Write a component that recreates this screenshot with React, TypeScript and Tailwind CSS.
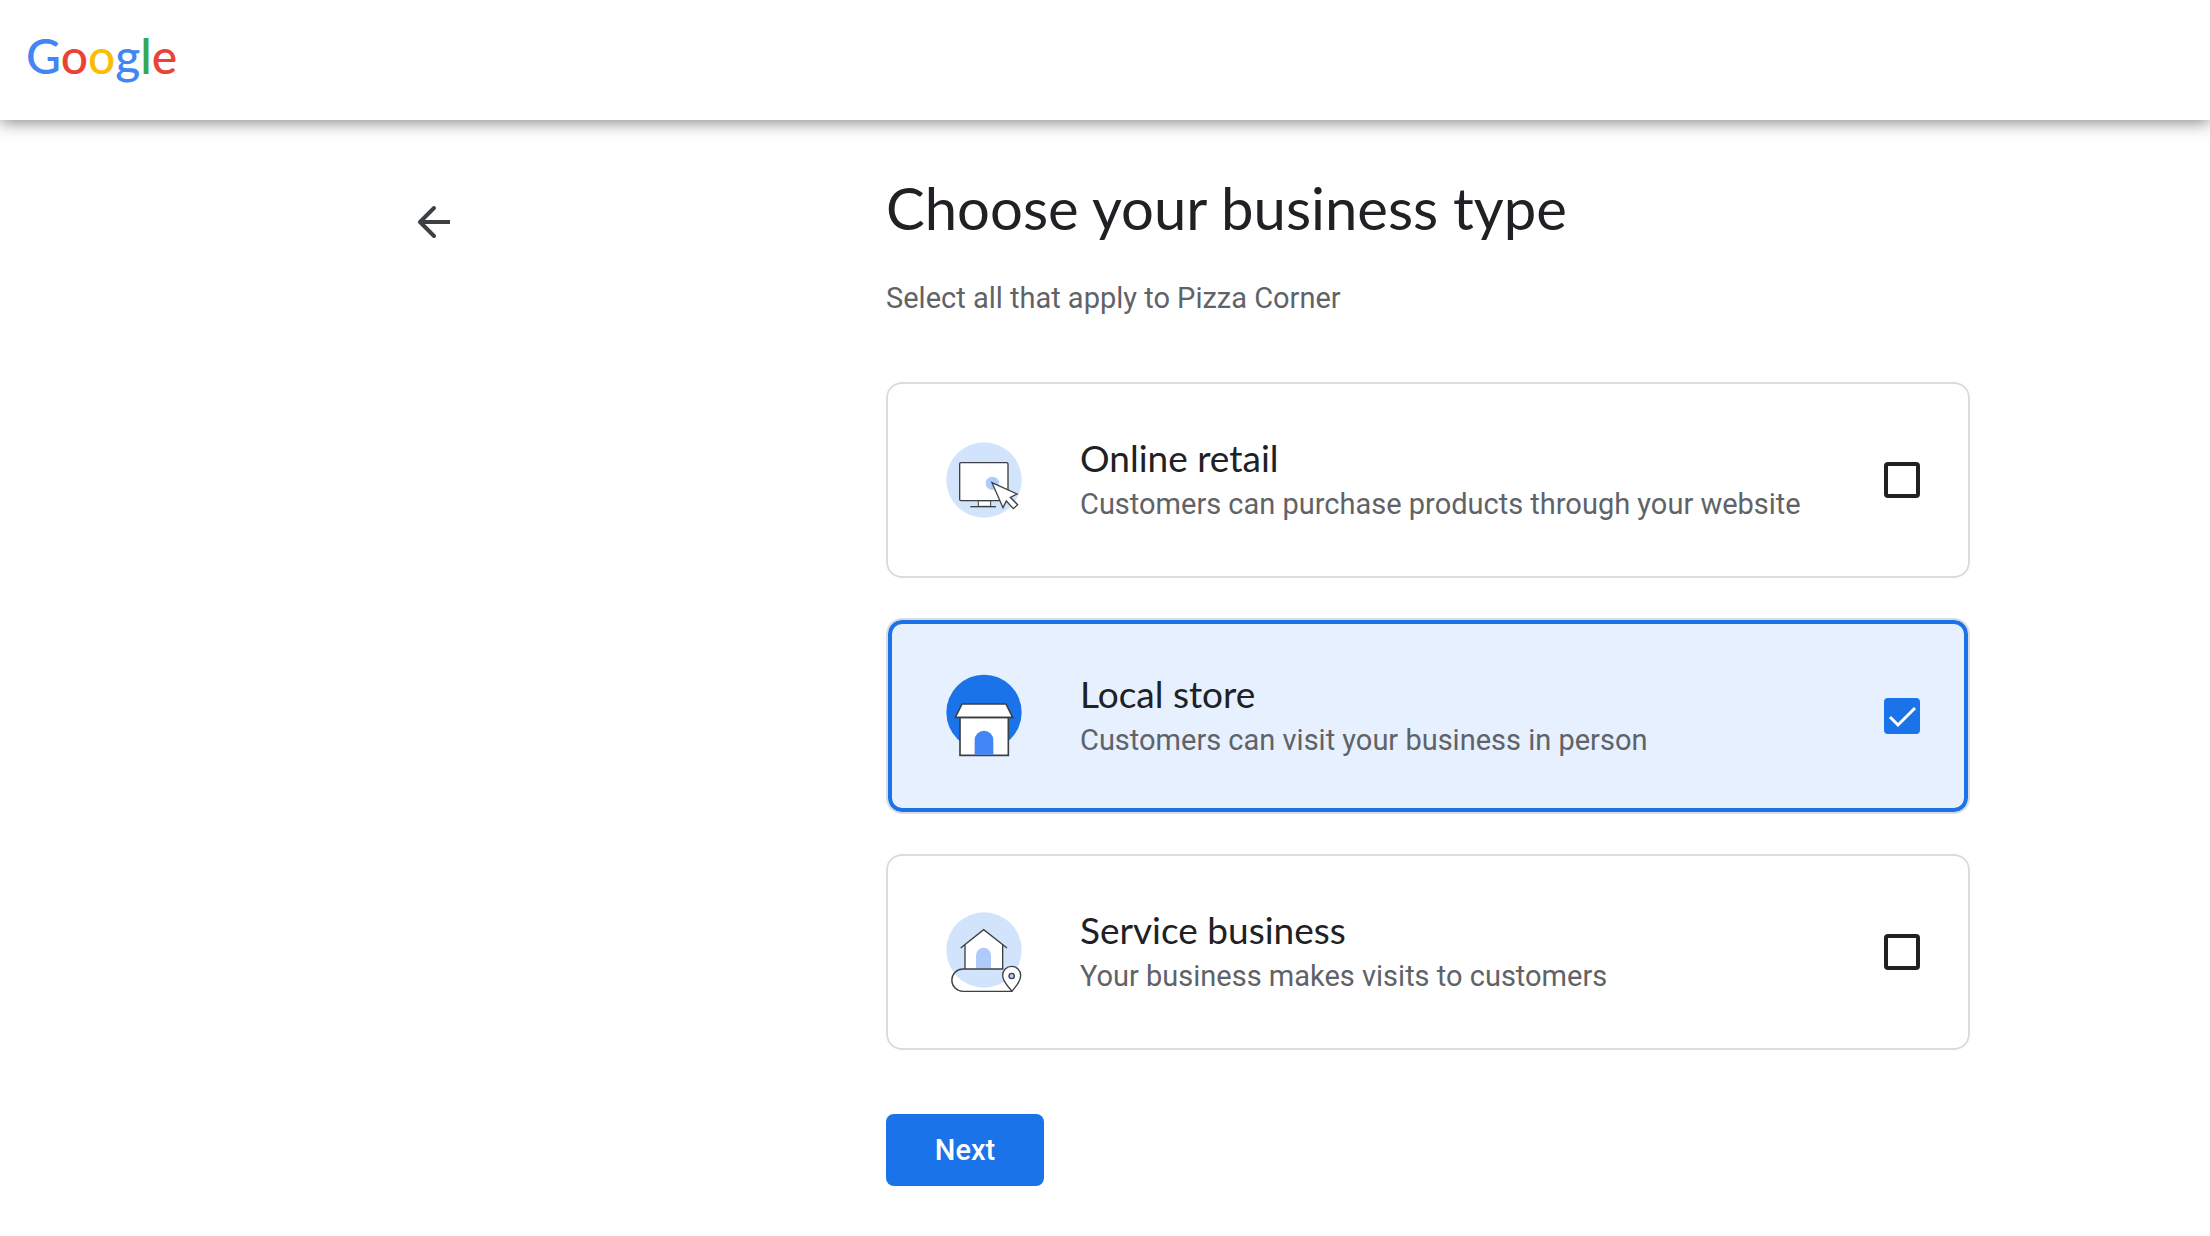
import React, { useState } from 'react';

const OnlineRetailIcon: React.FC = () => (
    <svg className="w-[76px] h-[76px] shrink-0" viewBox="48 36 228 228" fill="none" aria-hidden="true">
        <circle cx="162" cy="150" r="113" fill="#d2e3fc" />
        <path d="M145 212v17h37v-17z" fill="#fff" stroke="#3c4043" strokeWidth="3" />
        <path d="M121 230h77" stroke="#3c4043" strokeWidth="4" />
        <rect x="89" y="98" width="145" height="114" rx="4" fill="#fff" stroke="#3c4043" strokeWidth="4" />
        <circle cx="187" cy="160" r="20" fill="#aecbfa" />
        <path d="M186 158l75 34-20 10 22 22-13 12-21-23-10 20z" fill="#fff" stroke="#3c4043" strokeWidth="4" />
    </svg>
);

const LocalStoreIcon: React.FC = () => (
    <svg className="w-[76px] h-[84px] shrink-0" viewBox="48 27 228 252" fill="none" aria-hidden="true">
        <circle cx="162" cy="142" r="113" fill="#1a73e8" />
        <path d="M90 157h145v114H90z" fill="#fff" stroke="#3c4043" strokeWidth="5" />
        <path d="M134 269v-44a28 28 0 0 1 56 0v44z" fill="#4285f4" />
        <path d="M96 117h132l20 40H76z" fill="#fff" stroke="#3c4043" strokeWidth="5" />
    </svg>
);

const ServiceBusinessIcon: React.FC = () => (
    <svg className="w-[76px] h-20 shrink-0" viewBox="48 36 228 240" fill="none" aria-hidden="true">
        <circle cx="162" cy="150" r="113" fill="#d2e3fc" />
        <path d="M105 206v-73l56-44 57 44v73z" fill="#fff" />
        <path d="M138 205v-39a22 22 0 0 1 45 0v39z" fill="#aecbfa" />
        <path d="M92 144l69-55 70 55M105 134v73M218 134v73" stroke="#3c4043" strokeWidth="4" />
        <path d="M220 207H99a33 33 0 0 0 0 67h147" stroke="#3c4043" strokeWidth="4" />
        <path d="M246 274c-12-17-28-27-28-48a27 27 0 0 1 54 0c0 21-14 31-26 48z" fill="#fff" stroke="#3c4043" strokeWidth="4" />
        <circle cx="245" cy="228" r="8" fill="#aecbfa" stroke="#3c4043" strokeWidth="4" />
    </svg>
);

const businessTypes = [
    {
        id: 'online-retail',
        title: 'Online retail',
        description: 'Customers can purchase products through your website',
        Icon: OnlineRetailIcon,
    },
    {
        id: 'local-store',
        title: 'Local store',
        description: 'Customers can visit your business in person',
        Icon: LocalStoreIcon,
    },
    {
        id: 'service-business',
        title: 'Service business',
        description: 'Your business makes visits to customers',
        Icon: ServiceBusinessIcon,
    },
];

const App: React.FC = () => {
    const [selected, setSelected] = useState<string[]>(['local-store']);

    const toggle = (id: string) => {
        setSelected((prev) => (prev.includes(id) ? prev.filter((item) => item !== id) : [...prev, id]));
    };

    return (
        <div className="min-h-screen bg-white font-[Roboto,sans-serif] text-[#202124]">
            <header className="flex h-[120px] items-center px-[26px] pb-2 shadow-[0_2px_16px_rgba(0,0,0,0.5)]">
                <a href="/" className="font-[Lato,sans-serif] text-[48px] leading-none font-medium">
                    <span className="text-[#4285f4]">G</span>
                    <span className="text-[#ea4335]">o</span>
                    <span className="text-[#fbbc05]">o</span>
                    <span className="text-[#4285f4]">g</span>
                    <span className="text-[#34a853]">l</span>
                    <span className="text-[#ea4335]">e</span>
                </a>
            </header>

            <main className="grid grid-cols-[443fr_542fr_120fr] pt-[54px] pb-12">
                <div className="flex items-start justify-center pt-[26px] pr-[18px]">
                    <button type="button" aria-label="Back" className="p-1">
                        <svg className="w-10 h-10" viewBox="0 0 40 40" fill="none" stroke="#3c4043" strokeWidth="4">
                            <path d="M36 18H7" />
                            <path d="M20 4L6 18l14 14" strokeLinecap="round" strokeLinejoin="round" />
                        </svg>
                    </button>
                </div>

                <div>
                    <h1 className="font-[Lato,sans-serif] text-[58px] leading-[68px]">Choose your business type</h1>
                    <p className="mt-9 text-[29px] leading-10 text-[#5f6368]">Select all that apply to Pizza Corner</p>

                    {/* Business type cards */}
                    <div className="mt-16 flex flex-col gap-10">
                        {businessTypes.map(({ id, title, description, Icon }) => (
                            <label
                                key={id}
                                htmlFor={id}
                                className="flex h-[196px] cursor-pointer items-center gap-[58px] rounded-2xl border-2 border-[#dadce0] pl-[58px] pr-12 has-checked:bg-[#e6f0fe] has-checked:inset-ring-4 has-checked:inset-ring-[#1a73e8]"
                            >
                                <Icon />
                                <span className="flex-1">
                                    <span className="block font-[Lato,sans-serif] text-[37px] leading-[44px]">{title}</span>
                                    <span className="mt-1 block text-[29px] leading-10 text-[#5f6368]">{description}</span>
                                </span>
                                <span className="relative flex shrink-0">
                                    <input
                                        id={id}
                                        type="checkbox"
                                        checked={selected.includes(id)}
                                        onChange={() => toggle(id)}
                                        className="size-9 appearance-none rounded border-4 border-[#202124] checked:border-[#1a73e8] checked:bg-[#1a73e8]"
                                    />
                                    {selected.includes(id) && (
                                        <svg className="pointer-events-none absolute inset-0 size-9" viewBox="0 0 36 36" fill="none">
                                            <path d="M6 19l8 8L31 10" stroke="#fff" strokeWidth="3" />
                                        </svg>
                                    )}
                                </span>
                            </label>
                        ))}
                    </div>

                    <button type="button" className="mt-16 min-w-[158px] rounded-lg bg-[#1a73e8] px-12 py-4 text-[29px] leading-10 font-medium text-white">
                        Next
                    </button>
                </div>
            </main>
        </div>
    );
};

export default App;
